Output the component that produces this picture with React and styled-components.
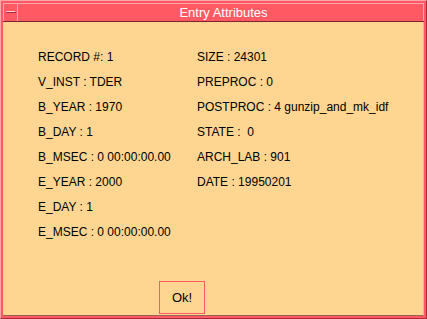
import React from "react";
import styled, { createGlobalStyle } from "styled-components";

const Global = createGlobalStyle`
  html, body { margin: 0; padding: 0; background: #ffffff; }
  #root { width: 427px; height: 319px; }
  * { box-sizing: border-box; }
`;

const RED = "#ff5a64";
const LIGHT = "#ffa4ac";
const DARK = "#a82a36";
const YELLOW = "#ffd691";

const Frame = styled.div`
  width: 427px;
  height: 319px;
  background: ${RED};
  border: 1px solid;
  border-color: ${LIGHT} ${DARK} ${DARK} ${LIGHT};
  padding: 2px;
  display: flex;
  flex-direction: column;
  font-family: "Liberation Sans", Arial, sans-serif;
`;

const TitleRow = styled.div`
  display: flex;
  height: 19px;
  border-bottom: 1px solid #7e2430;
`;

const MenuButton = styled.div`
  width: 15px;
  border-top: 1px solid ${LIGHT};
  border-left: 1px solid ${LIGHT};
  border-right: 1px solid ${LIGHT};
  display: flex;
  align-items: flex-start;
  padding: 7px 0 0 2px;
`;

const MenuGlyph = styled.div`
  width: 10px;
  height: 2px;
  border-top: 1px solid #ffd0d4;
  border-right: 1px solid ${DARK};
  border-bottom: 1px solid ${DARK};
`;

const Title = styled.div`
  flex: 1;
  border-top: 1px solid ${LIGHT};
  border-right: 1px solid ${LIGHT};
  color: #ffffff;
  font-size: 13px;
  line-height: 17px;
  text-align: center;
  padding-left: 6px;
`;

const Content = styled.div`
  flex: 1;
  background: ${YELLOW};
  border-right: 1px solid ${LIGHT};
  border-bottom: 1px solid #9c6354;
  display: flex;
  flex-direction: column;
  padding: 23px 0 1px 35px;
`;

const Fields = styled.div`
  display: grid;
  grid-template-columns: 159px auto;
  grid-auto-flow: column;
  grid-template-rows: repeat(8, 25px);
`;

const Field = styled.div`
  font-size: 12px;
  line-height: 25px;
  color: #000000;
  white-space: pre;
  grid-column: ${(p) => p.$col};
`;

const Spacer = styled.div`
  flex: 1;
`;

const ButtonRow = styled.div`
  display: flex;
  padding-left: 121px;
`;

const OkButton = styled.button`
  width: 46px;
  height: 33px;
  background: ${YELLOW};
  border: 1px solid ${RED};
  font-family: "Liberation Sans", Arial, sans-serif;
  font-size: 13px;
  color: #000000;
  padding: 0;
  margin: 0;
`;

const left = [
  "RECORD #: 1",
  "V_INST : TDER",
  "B_YEAR : 1970",
  "B_DAY : 1",
  "B_MSEC : 0 00:00:00.00",
  "E_YEAR : 2000",
  "E_DAY : 1",
  "E_MSEC : 0 00:00:00.00",
];

const right = [
  "SIZE : 24301",
  "PREPROC : 0",
  "POSTPROC : 4 gunzip_and_mk_idf",
  "STATE :  0",
  "ARCH_LAB : 901",
  "DATE : 19950201",
];

export default function App() {
  return (
    <>
      <Global />
      <Frame>
        <TitleRow>
          <MenuButton>
            <MenuGlyph />
          </MenuButton>
          <Title>Entry Attributes</Title>
        </TitleRow>
        <Content>
          <Fields>
            {left.map((t) => (
              <Field key={t} $col={1}>{t}</Field>
            ))}
            {right.map((t) => (
              <Field key={t} $col={2}>{t}</Field>
            ))}
          </Fields>
          <Spacer />
          <ButtonRow>
            <OkButton>Ok!</OkButton>
          </ButtonRow>
        </Content>
      </Frame>
    </>
  );
}
